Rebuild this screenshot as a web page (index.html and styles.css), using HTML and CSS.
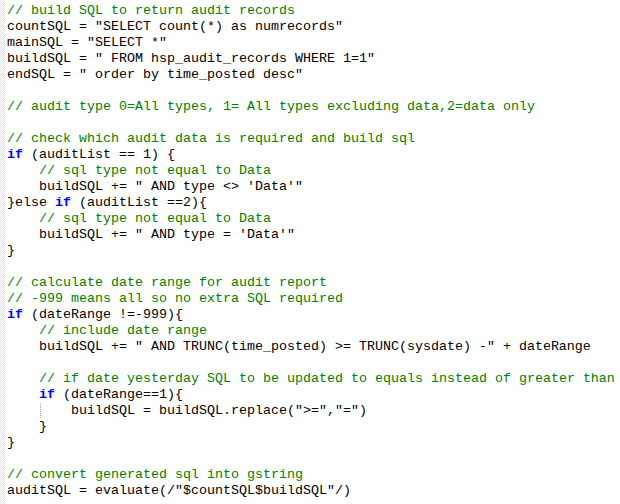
FILE: index.html
```html
<!DOCTYPE html>
<html>
<head>
<meta charset="utf-8">
<link rel="stylesheet" href="styles.css">
</head>
<body>
<div class="editor">
<div class="gutter"></div>
<pre class="code"><span class="c">// build SQL to return audit records</span>
countSQL = "SELECT count(*) as numrecords"
mainSQL = "SELECT *"
buildSQL = " FROM hsp_audit_records WHERE 1=1"
endSQL = " order by time_posted desc"

<span class="c">// audit type 0=All types, 1= All types excluding data,2=data only</span>

<span class="c">// check which audit data is required and build sql</span>
<span class="k">if</span> (auditList == 1) {
    <span class="c">// sql type not equal to Data</span>
    buildSQL += " AND type &lt;&gt; 'Data'"
}else <span class="k">if</span> (auditList ==2){
    <span class="c">// sql type not equal to Data</span>
    buildSQL += " AND type = 'Data'"
}

<span class="c">// calculate date range for audit report</span>
<span class="c">// -999 means all so no extra SQL required</span>
<span class="k">if</span> (dateRange !=-999){
    <span class="c">// include date range</span>
    buildSQL += " AND TRUNC(time_posted) &gt;= TRUNC(sysdate) -" + dateRange

    <span class="c">// if date yesterday SQL to be updated to equals instead of greater than</span>
    <span class="k">if</span> (dateRange==1){
    <span class="guide"> </span>   buildSQL = buildSQL.replace("&gt;=","=")
    }
}

<span class="c">// convert generated sql into gstring</span>
auditSQL = evaluate(/"$countSQL$buildSQL"/)</pre>
</div>
</body>
</html>
```

FILE: styles.css
```css
html, body {
  margin: 0;
  padding: 0;
  background: #ffffff;
}

.editor {
  display: flex;
  width: 620px;
  height: 504px;
  overflow: hidden;
  background: #ffffff;
}

.gutter {
  flex: 0 0 5px;
  height: 504px;
  background-color: #ffffff;
  background-image: conic-gradient(#e4e4e4 25%, #ffffff 0 50%, #e4e4e4 0 75%, #ffffff 0);
  background-size: 2px 2px;
}

.code {
  margin: 0;
  padding: 3px 0 0 2px;
  font-family: "Liberation Mono", "Courier New", monospace;
  font-size: 13.333px;
  line-height: 16px;
  color: #000000;
  white-space: pre;
}

.c {
  color: #008000;
}

.k {
  color: #0000ff;
  font-weight: bold;
}

.guide {
  display: inline-block;
  width: 8px;
  height: 16px;
  vertical-align: top;
  background-image: repeating-linear-gradient(to bottom, #a0a0a0 0 1px, transparent 1px 2px);
  background-size: 1px 100%;
  background-repeat: no-repeat;
  background-position: 1px 0;
}
```
